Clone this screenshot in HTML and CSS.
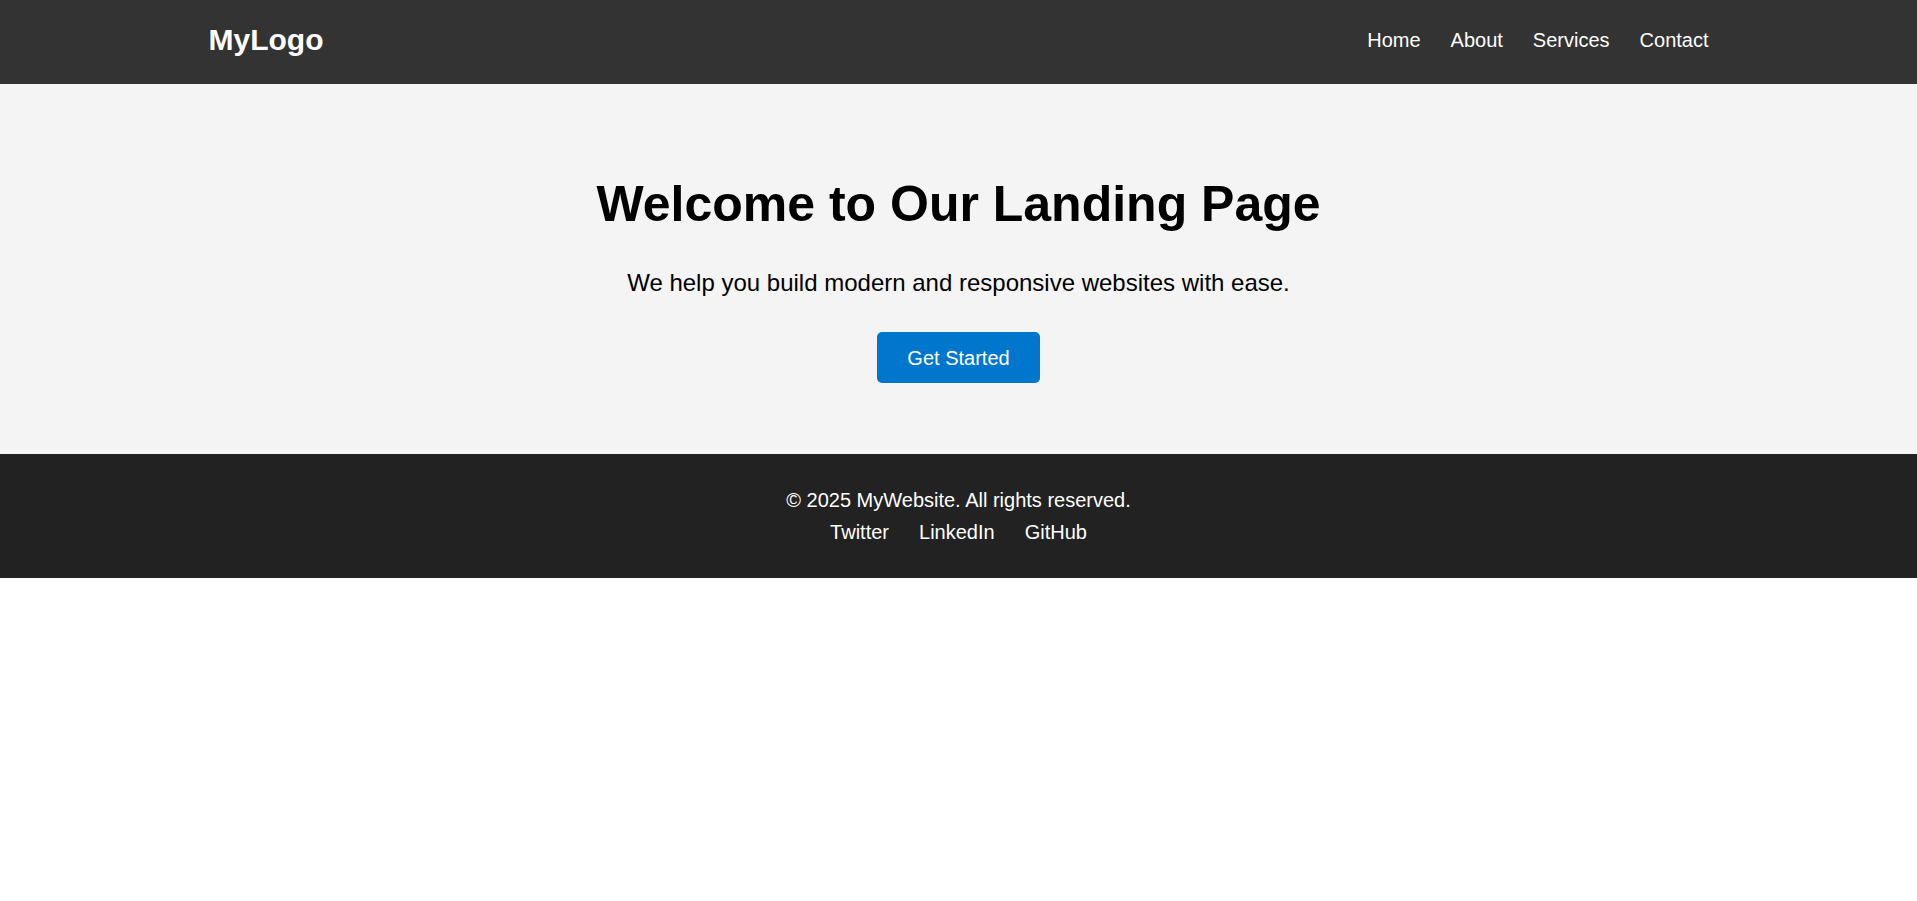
FILE: index.html
```html
<!DOCTYPE html>
<html lang="en">
<head>
<meta charset="UTF-8">
<title>Landing Page</title>
<link rel="stylesheet" href="styles.css">
</head>
<body>
<header class="site-header">
  <div class="container header-inner">
    <div class="logo">MyLogo</div>
    <nav class="nav">
      <a href="#">Home</a>
      <a href="#">About</a>
      <a href="#">Services</a>
      <a href="#">Contact</a>
    </nav>
  </div>
</header>
<section class="hero">
  <h1 class="hero-title">Welcome to Our Landing Page</h1>
  <p class="hero-text">We help you build modern and responsive websites with ease.</p>
  <a href="#" class="btn">Get Started</a>
</section>
<footer class="site-footer">
  <p class="copy">© 2025 MyWebsite. All rights reserved.</p>
  <div class="social">
    <a href="#">Twitter</a>
    <a href="#">LinkedIn</a>
    <a href="#">GitHub</a>
  </div>
</footer>
</body>
</html>
```
FILE: styles.css
```css
* { box-sizing: border-box; }
html, body { margin: 0; padding: 0; }
body {
  font-family: "Liberation Sans", Arial, sans-serif;
  color: #000;
  background: #fff;
}
a { text-decoration: none; color: inherit; }

.site-header {
  background: #333;
  color: #fff;
  height: 84px;
  padding: 23px 0 0;
}
.container {
  max-width: 1500px;
  margin: 0 auto;
}
.header-inner {
  display: flex;
  justify-content: space-between;
  align-items: center;
}
.logo {
  font-size: 30px;
  font-weight: bold;
  line-height: 34.5px;
}
.nav {
  display: flex;
  gap: 30px;
  font-size: 20px;
  line-height: 23px;
}
.nav a { color: #fff; }

.hero {
  background: #f4f4f4;
  text-align: center;
  padding: 92px 20px 71px;
  height: 370px;
}
.hero-title {
  font-size: 50px;
  font-weight: bold;
  line-height: 57.5px;
  margin: 0 0 35px;
}
.hero-text {
  font-size: 24px;
  line-height: 27.6px;
  margin: 0 0 36px;
}
.btn {
  display: inline-block;
  background: #0077cc;
  color: #fff;
  font-size: 20px;
  line-height: 23px;
  padding: 15px 30px 13px;
  border-radius: 5px;
}

.site-footer {
  background: #222;
  color: #fff;
  text-align: center;
  padding: 35px 0 34px;
  font-size: 20px;
  line-height: 23px;
}
.copy { margin: 0 0 9px; }
.social {
  display: flex;
  justify-content: center;
  gap: 30px;
}
.social a { color: #fff; }
```
